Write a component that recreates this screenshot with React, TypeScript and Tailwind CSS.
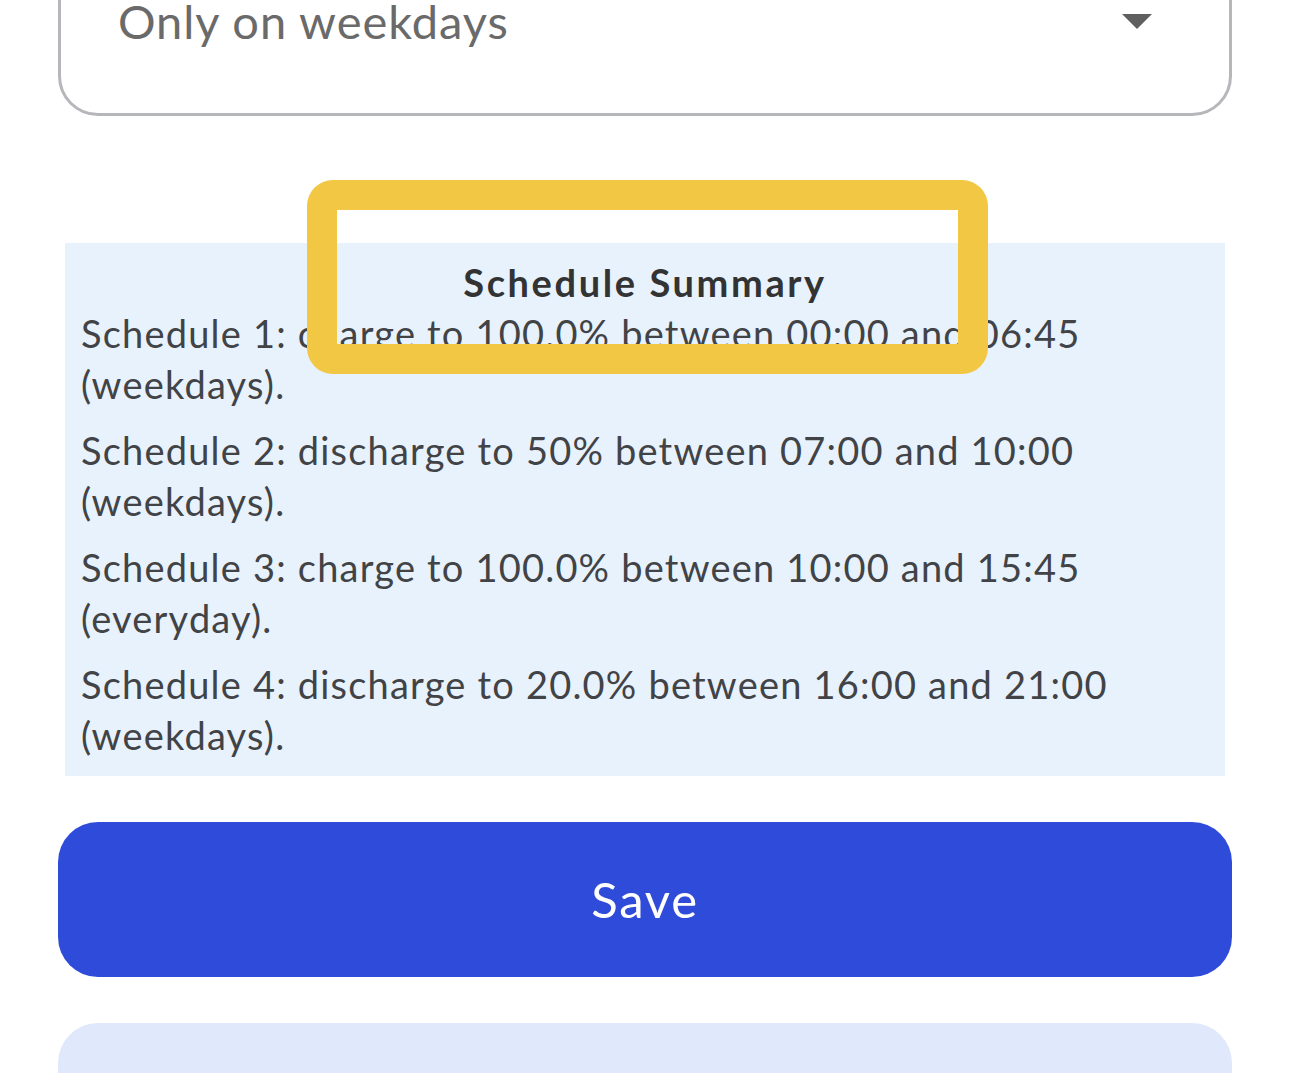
import React from 'react';

const schedules = [
    'Schedule 1: charge to 100.0% between 00:00 and 06:45 (weekdays).',
    'Schedule 2: discharge to 50% between 07:00 and 10:00 (weekdays).',
    'Schedule 3: charge to 100.0% between 10:00 and 15:45 (everyday).',
    'Schedule 4: discharge to 20.0% between 16:00 and 21:00 (weekdays).',
];

const Caret = () => (
    <svg width="30" height="15" viewBox="0 0 30 15" className="shrink-0">
        <path d="M0 0 L30 0 L15 15 Z" fill="#5f5f5f" />
    </svg>
);

export default function App() {
    return (
        <div
            className="relative w-[1290px] h-[1073px] overflow-hidden bg-white px-[58px]"
            style={{ fontFamily: 'Lato, "Noto Sans", sans-serif' }}
        >
            {/* Repeat dropdown */}
            <div className="-mt-[74px] h-[190px] rounded-[40px] border-[3px] border-[#b5b7bb] flex items-center justify-between pl-[57px] pr-[77px]">
                <span className="text-[47px] text-[#6a6a6a] leading-none tracking-[0.95px]">Only on weekdays</span>
                <Caret />
            </div>

            {/* Summary */}
            <div className="mt-[127px] mx-[7px] bg-[#e8f2fd] pt-[17px] pb-[15px] px-[16px]">
                <h2 className="text-center text-[38px] leading-[44px] font-bold text-[#333333] mb-[4px] tracking-[2.6px]">
                    Schedule Summary
                </h2>
                <div className="flex flex-col gap-[15px]">
                    {schedules.map((s) => (
                        <p key={s} className="text-[38px] leading-[51px] text-[#414346] tracking-[1.2px] pr-[80px]">
                            {s}
                        </p>
                    ))}
                </div>
            </div>

            <button className="mt-[46px] w-full h-[155px] rounded-[40px] bg-[#2f4bd9] text-white text-[49px] tracking-[1.8px]">
                Save
            </button>

            <div className="mt-[46px] w-full h-[155px] rounded-[40px] bg-[#dfe9fb]" />

            {/* Highlight frame */}
            <div className="absolute left-[307px] top-[180px] w-[681px] h-[194px] rounded-[26px] border-[30px] border-[#f2c744] pointer-events-none" />
        </div>
    );
}
